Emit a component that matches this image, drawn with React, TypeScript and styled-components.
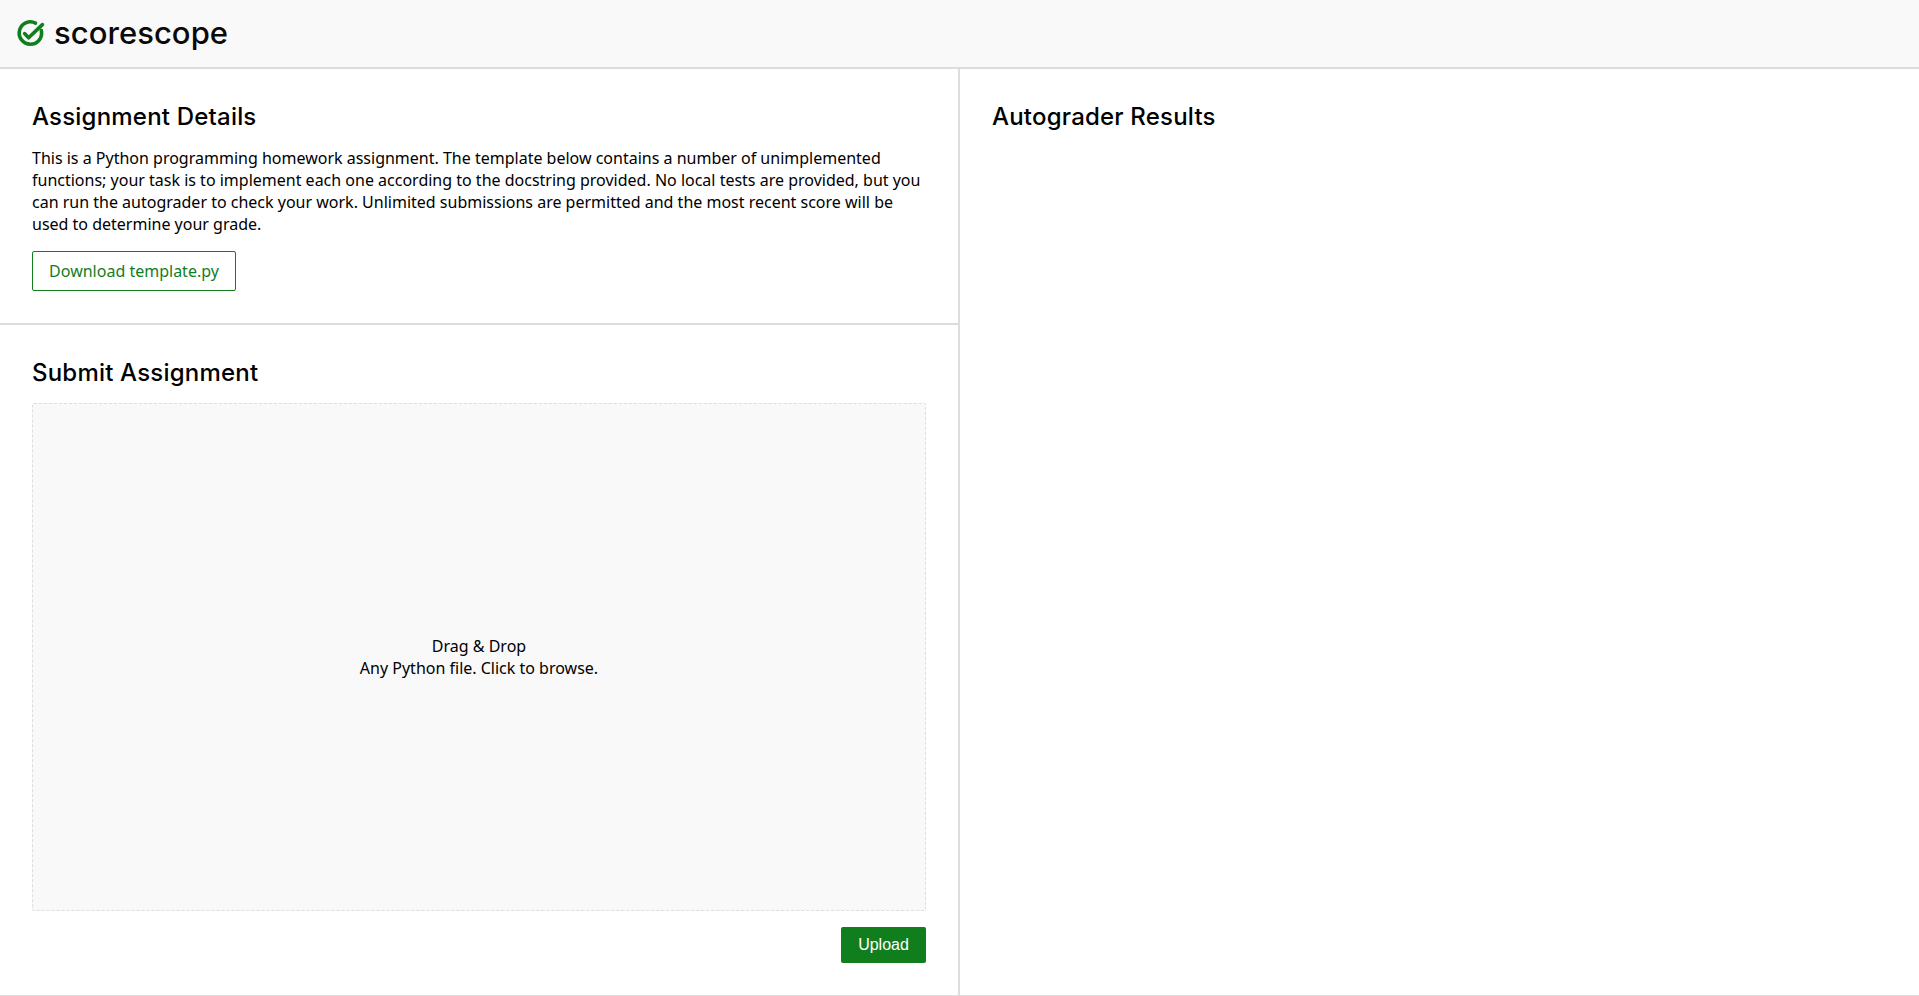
import React from "react";
import styled, { createGlobalStyle } from "styled-components";

const Global = createGlobalStyle`
  html, body { margin: 0; padding: 0; background: #fff; }
  body { font-family: "Noto Sans", sans-serif; font-size: 16px; color: #000; }
  * { box-sizing: border-box; }
`;

const Page = styled.div`
  height: 996px;
  display: flex;
  flex-direction: column;
  overflow: hidden;
`;

const Header = styled.header`
  height: 69px;
  flex: none;
  display: flex;
  align-items: center;
  gap: 9px;
  padding: 0 0 2px 16px;
  background: #f9f9f9;
  border-bottom: 2px solid #dddddd;
`;

const Wordmark = styled.span`
  font-family: "Inter", sans-serif;
  font-size: 31px;
  font-weight: 500;
  letter-spacing: 0.05px;
  color: #0a0a0a;
`;

const Main = styled.main`
  flex: 1;
  display: grid;
  grid-template-columns: 960px 1fr;
  border-bottom: 1px solid #dddddd;
  min-height: 0;
`;

const LeftColumn = styled.div`
  display: flex;
  flex-direction: column;
  border-right: 2px solid #dddddd;
  min-height: 0;
`;

const Section = styled.section`
  padding: 31px 32px 32px;
`;

const DetailsSection = styled(Section)`
  height: 256px;
  flex: none;
  border-bottom: 2px solid #dddddd;
`;

const SubmitSection = styled(Section)`
  flex: 1;
  display: flex;
  flex-direction: column;
  min-height: 0;
`;

const Heading = styled.h2`
  margin: 0 0 14px;
  padding-top: 1px;
  font-family: "Inter", sans-serif;
  font-size: 24px;
  font-weight: 500;
  letter-spacing: 0.2px;
  line-height: 32px;
  color: #000;
`;

const Body = styled.p`
  margin: 0 0 16px;
  font-size: 16px;
  line-height: 22px;
`;

const OutlineButton = styled.button`
  display: block;
  width: 204px;
  height: 40px;
  padding: 0;
  border: 1px solid #117e1e;
  border-radius: 2px;
  background: #fff;
  color: #117e1e;
  font-family: "Noto Sans", sans-serif;
  font-size: 16px;
`;

const DropZone = styled.div`
  height: 508px;
  flex: none;
  display: flex;
  flex-direction: column;
  align-items: center;
  justify-content: center;
  background: #f9f9f9;
  border: 1px dashed #dddddd;
  border-radius: 2px;
  font-size: 16px;
  line-height: 22px;
  text-align: center;
`;

const Actions = styled.div`
  display: flex;
  justify-content: flex-end;
  margin-top: 16px;
`;

const UploadButton = styled.button`
  width: 85px;
  height: 36px;
  padding: 0;
  border: none;
  border-radius: 2px;
  background: #117e1e;
  color: #fff;
  font-family: "Liberation Sans", sans-serif;
  font-size: 16px;
`;

const Logo = () => (
  <svg width="29" height="29" viewBox="0 0 29 29" fill="none">
    <path
      d="M19.5 5.1A11.2 11.2 0 1 0 25.3 12.5"
      stroke="#117e1e"
      strokeWidth="3.6"
      strokeLinecap="round"
    />
    <path
      d="M8.6 15.6l4 4.2L26.4 6.6"
      stroke="#117e1e"
      strokeWidth="3.6"
      strokeLinecap="round"
      strokeLinejoin="round"
    />
  </svg>
);

export default function App() {
  return (
    <Page>
      <Global />
      <Header>
        <Logo />
        <Wordmark>scorescope</Wordmark>
      </Header>
      <Main>
        <LeftColumn>
          <DetailsSection>
            <Heading>Assignment Details</Heading>
            <Body>
              This is a Python programming homework assignment. The template below contains a number of unimplemented
              functions; your task is to implement each one according to the docstring provided. No local tests are
              provided, but you can run the autograder to check your work. Unlimited submissions are permitted and the
              most recent score will be used to determine your grade.
            </Body>
            <OutlineButton>Download template.py</OutlineButton>
          </DetailsSection>
          <SubmitSection>
            <Heading>Submit Assignment</Heading>
            <DropZone>
              <div>Drag &amp; Drop</div>
              <div>Any Python file. Click to browse.</div>
            </DropZone>
            <Actions>
              <UploadButton>Upload</UploadButton>
            </Actions>
          </SubmitSection>
        </LeftColumn>
        <Section>
          <Heading>Autograder Results</Heading>
        </Section>
      </Main>
    </Page>
  );
}
